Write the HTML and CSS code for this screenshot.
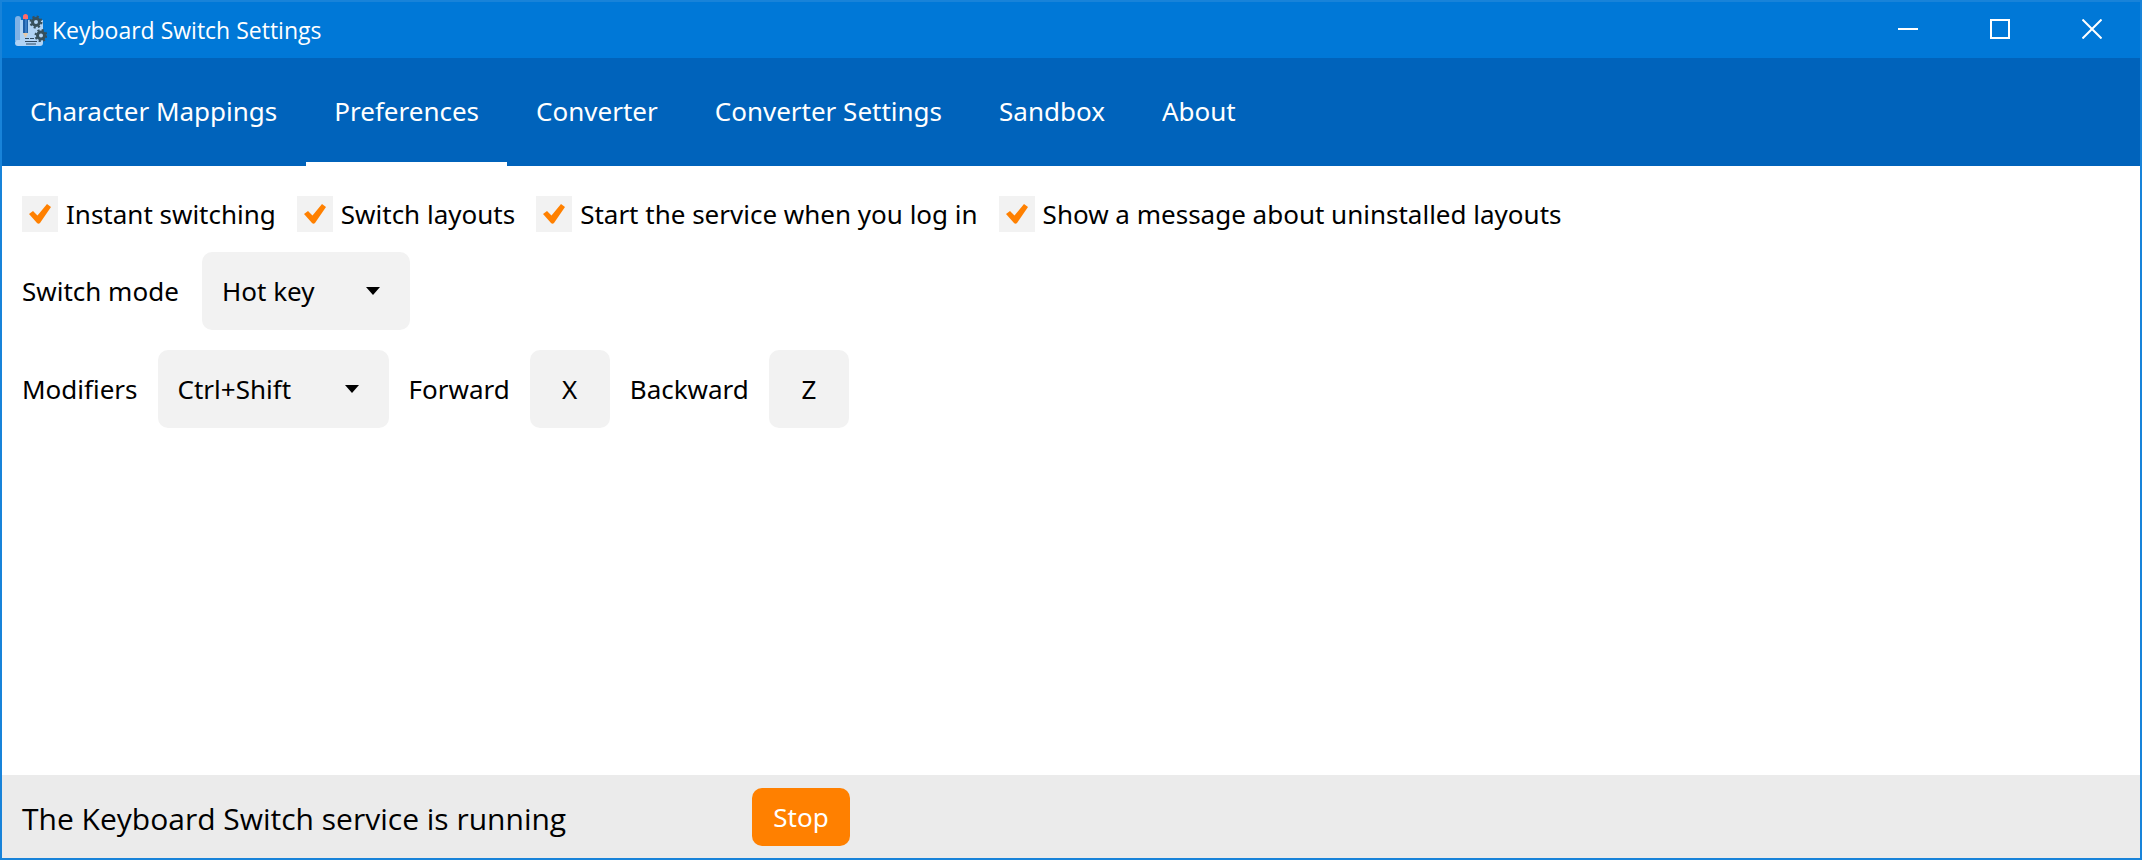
FILE: index.html
```html
<!DOCTYPE html>
<html lang="en">
<head>
<meta charset="utf-8">
<title>Keyboard Switch Settings</title>
<link rel="stylesheet" href="styles.css">
</head>
<body>
<div class="window">
  <header class="titlebar">
    <svg class="app-icon" viewBox="0 0 32 32" aria-hidden="true">
      <path fill="#7fb2e6" d="M0 5a3 3 0 0 1 6 0v22H0z"/>
      <path fill="#b0d3f5" d="M5 6h23v23a3 3 0 0 1-3 3H3a3 3 0 0 1 0-6h2z"/>
      <path fill="#1f5fa8" d="M8 4h5v15H8z"/>
      <path fill="#3a7cc4" d="M10 5h2v14h-2z"/>
      <path fill="#ff6b6b" d="M8 5V2.500a2.500 2.500 0 0 1 5 0V5z"/>
      <path fill="#e8c9a8" d="M8 19h5l-2.500 5z"/>
      <path stroke="#2f4a63" d="M10 24.500h4M15 24.500h4M10 27.500h12M11 30h10"/>
      <g fill="none" stroke="#37505c">
        <circle cx="21" cy="8" r="3.500" stroke-width="3"/>
        <circle cx="21" cy="8" r="5.500" stroke-width="2" stroke-dasharray="2.160 2.160"/>
        <circle cx="26" cy="21.500" r="3.500" stroke-width="3"/>
        <circle cx="26" cy="21.500" r="5.500" stroke-width="2" stroke-dasharray="2.160 2.160"/>
      </g>
    </svg>
    <h1 class="title">Keyboard Switch Settings</h1>
    <div class="window-controls">
      <button class="window-button" type="button" aria-label="Minimize">
        <svg class="window-glyph" viewBox="0 0 20 20"><path d="M0 10h20"/></svg>
      </button>
      <button class="window-button" type="button" aria-label="Maximize">
        <svg class="window-glyph" viewBox="0 0 20 20"><path d="M1 1h18v18H1z"/></svg>
      </button>
      <button class="window-button" type="button" aria-label="Close">
        <svg class="window-glyph" viewBox="0 0 20 20"><path d="M.5.5l19 19M19.500.5l-19 19"/></svg>
      </button>
    </div>
  </header>

  <nav class="tabs" role="tablist">
    <button class="tab" type="button" role="tab">Character Mappings</button>
    <button class="tab tab-active" type="button" role="tab" aria-selected="true">Preferences</button>
    <button class="tab" type="button" role="tab">Converter</button>
    <button class="tab" type="button" role="tab">Converter Settings</button>
    <button class="tab" type="button" role="tab">Sandbox</button>
    <button class="tab" type="button" role="tab">About</button>
  </nav>

  <main class="content">
    <div class="row row-checks">
      <label class="check"><span class="check-box"><input class="check-input" type="checkbox" checked><svg class="check-mark" viewBox="0 0 36 36"><path d="M7 18l4-3 4.500 4.500L25 8l4 3-11 16q-1.500 1.500-3 0z"/></svg></span>Instant switching</label>
      <label class="check"><span class="check-box"><input class="check-input" type="checkbox" checked><svg class="check-mark" viewBox="0 0 36 36"><path d="M7 18l4-3 4.500 4.500L25 8l4 3-11 16q-1.500 1.500-3 0z"/></svg></span>Switch layouts</label>
      <label class="check"><span class="check-box"><input class="check-input" type="checkbox" checked><svg class="check-mark" viewBox="0 0 36 36"><path d="M7 18l4-3 4.500 4.500L25 8l4 3-11 16q-1.500 1.500-3 0z"/></svg></span>Start the service when you log in</label>
      <label class="check"><span class="check-box"><input class="check-input" type="checkbox" checked><svg class="check-mark" viewBox="0 0 36 36"><path d="M7 18l4-3 4.500 4.500L25 8l4 3-11 16q-1.500 1.500-3 0z"/></svg></span>Show a message about uninstalled layouts</label>
    </div>
    <div class="row">
      <label class="mode-label" for="mode">Switch mode</label>
      <span class="dropdown dropdown-mode">
        <select class="select" id="mode"><option>Hot key</option></select>
        <svg class="arrow" viewBox="0 0 14 8"><path d="M0 0h14L7 8z"/></svg>
      </span>
    </div>
    <div class="row">
      <label for="modifiers">Modifiers</label>
      <span class="dropdown dropdown-modifiers">
        <select class="select" id="modifiers"><option>Ctrl+Shift</option></select>
        <svg class="arrow" viewBox="0 0 14 8"><path d="M0 0h14L7 8z"/></svg>
      </span>
      <label for="forward">Forward</label>
      <input class="key" id="forward" type="text" value="X">
      <label for="backward">Backward</label>
      <input class="key" id="backward" type="text" value="Z">
    </div>
  </main>

  <footer class="status">
    <p class="status-text">The Keyboard Switch service is running</p>
    <button class="stop" type="button">Stop</button>
  </footer>
</div>
</body>
</html>
```
FILE: styles.css
```css
* {
  box-sizing: border-box;
}

body {
  margin: 0;
  font: 26px/36px "Noto Sans", "Open Sans", sans-serif;
  color: #000;
}

button,
input,
select {
  margin: 0;
  padding: 0;
  border: 0;
  font: inherit;
  color: inherit;
  background: none;
}

.window {
  display: flex;
  flex-direction: column;
  min-height: 100vh;
  border: 2px solid #1883d9;
  background: #fff;
}

.titlebar {
  display: flex;
  align-items: center;
  height: 56px;
  padding-left: 13px;
  gap: 5px;
  color: #fff;
  background: #0078d7;
}

.app-icon {
  width: 32px;
  height: 32px;
}

.title {
  margin: 0;
  font-family: "Open Sans", "Noto Sans", sans-serif;
  font-size: 23px;
  font-weight: 400;
}

.window-controls {
  display: flex;
  align-self: stretch;
  margin-left: auto;
  padding: 0 2px 2px 0;
}

.window-button {
  display: grid;
  place-items: center;
  width: 92px;
}

.window-glyph {
  width: 20px;
  height: 20px;
  fill: none;
  stroke: #fff;
  stroke-width: 2;
}

.tabs {
  display: flex;
  gap: 1px;
  height: 108px;
  color: #fff;
  background: #0063bb;
}

.tab {
  padding: 2px 28px 0;
  border-bottom: 4px solid transparent;
}

.tab-active {
  border-bottom-color: #fff;
}

.content {
  display: flex;
  flex: 1;
  flex-direction: column;
  gap: 20px;
  padding: 30px 20px;
}

.row {
  display: flex;
  flex-wrap: wrap;
  align-items: center;
  gap: 20px;
}

.row-checks {
  column-gap: 21px;
}

.check {
  display: flex;
  align-items: center;
  gap: 8px;
}

.check-box,
.dropdown {
  display: grid;
  align-items: center;
}

.check-input,
.check-mark {
  grid-area: 1 / 1;
  width: 36px;
  height: 36px;
}

.check-input {
  appearance: none;
  background: #f2f2f2;
}

.check-mark {
  fill: #ff8000;
  pointer-events: none;
}

.mode-label {
  min-width: 160px;
}

.dropdown-mode {
  width: 208px;
}

.dropdown-modifiers {
  width: 231px;
}

.select,
.key {
  height: 78px;
  border-radius: 10px;
  background: #f2f2f2;
}

.select {
  grid-area: 1 / 1;
  width: 100%;
  padding: 0 20px;
  appearance: none;
}

.arrow {
  grid-area: 1 / 1;
  justify-self: end;
  width: 14px;
  height: 8px;
  margin-right: 30px;
  pointer-events: none;
}

.key {
  width: 80px;
  text-align: center;
}

.status {
  display: flex;
  align-items: center;
  height: 83px;
  padding: 0 20px;
  background: #ebebeb;
}

.status-text {
  min-width: 730px;
  margin: 0;
  padding-top: 4px;
  font-family: "Open Sans", "Noto Sans", sans-serif;
  font-size: 30px;
}

.stop {
  min-width: 98px;
  height: 58px;
  padding: 0 20px;
  border-radius: 10px;
  color: #fff;
  background: #ff8000;
}
```
